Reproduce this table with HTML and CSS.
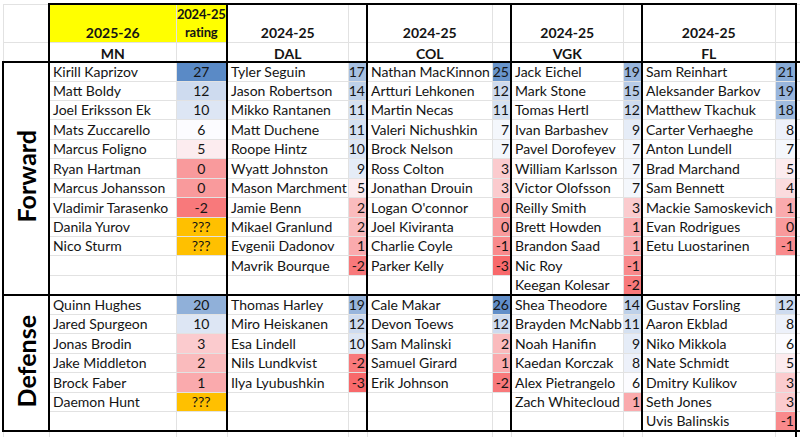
FILE: index.html
```html
<!DOCTYPE html>
<html>
<head>
<meta charset="utf-8">
<link rel="stylesheet" href="styles.css">
</head>
<body>
<table class="sheet">
<colgroup>
<col class="c-label"><col class="c-mn"><col class="c-mnr">
<col class="c-dal"><col class="c-r"><col class="c-col"><col class="c-r">
<col class="c-vgk"><col class="c-r"><col class="c-fl"><col class="c-flr"><col class="c-extra">
</colgroup>
<tbody>
<tr class="h1">
<td class="lab-blank"></td>
<td class="hd yel tl tt">2025-26</td>
<td class="hd hdn yel tt ctr">2024-25<br>rating</td>
<td class="hd tl tt">2024-25</td><td class="tt"></td>
<td class="hd tl tt">2024-25</td><td class="tt"></td>
<td class="hd tl tt">2024-25</td><td class="tt"></td>
<td class="hd tl tt">2024-25</td><td class="tt tr"></td>
<td class="x"></td>
</tr>
<tr class="h2">
<td class="lab-blank"></td>
<td class="hd tl">MN</td><td></td>
<td class="hd tl">DAL</td><td></td>
<td class="hd tl">COL</td><td></td>
<td class="hd tl">VGK</td><td></td>
<td class="hd tl">FL</td><td class="tr"></td>
<td class="x"></td>
</tr>

<tr class="sec">
<td class="lab" rowspan="12"><span class="vert">Forward</span></td>
<td class="n tl">Kirill Kaprizov</td><td class="r ctr v27">27</td>
<td class="n tl">Tyler Seguin</td><td class="r v17">17</td>
<td class="n tl">Nathan MacKinnon</td><td class="r v25">25</td>
<td class="n tl">Jack Eichel</td><td class="r v19">19</td>
<td class="n tl">Sam Reinhart</td><td class="r tr v21">21</td>
<td class="x"></td>
</tr>
<tr>
<td class="n tl">Matt Boldy</td><td class="r ctr v12">12</td>
<td class="n tl">Jason Robertson</td><td class="r v14">14</td>
<td class="n tl">Artturi Lehkonen</td><td class="r v12">12</td>
<td class="n tl">Mark Stone</td><td class="r v15">15</td>
<td class="n tl">Aleksander Barkov</td><td class="r tr v19">19</td>
<td class="x"></td>
</tr>
<tr>
<td class="n tl">Joel Eriksson Ek</td><td class="r ctr v10">10</td>
<td class="n tl">Mikko Rantanen</td><td class="r v11">11</td>
<td class="n tl">Martin Necas</td><td class="r v11">11</td>
<td class="n tl">Tomas Hertl</td><td class="r v12">12</td>
<td class="n tl">Matthew Tkachuk</td><td class="r tr v18">18</td>
<td class="x"></td>
</tr>
<tr>
<td class="n tl">Mats Zuccarello</td><td class="r ctr v6">6</td>
<td class="n tl">Matt Duchene</td><td class="r v11">11</td>
<td class="n tl">Valeri Nichushkin</td><td class="r v7">7</td>
<td class="n tl">Ivan Barbashev</td><td class="r v9">9</td>
<td class="n tl">Carter Verhaeghe</td><td class="r tr v8">8</td>
<td class="x"></td>
</tr>
<tr>
<td class="n tl">Marcus Foligno</td><td class="r ctr v5">5</td>
<td class="n tl">Roope Hintz</td><td class="r v10">10</td>
<td class="n tl">Brock Nelson</td><td class="r v7">7</td>
<td class="n tl">Pavel Dorofeyev</td><td class="r v7">7</td>
<td class="n tl">Anton Lundell</td><td class="r tr v7">7</td>
<td class="x"></td>
</tr>
<tr>
<td class="n tl">Ryan Hartman</td><td class="r ctr v0">0</td>
<td class="n tl">Wyatt Johnston</td><td class="r v9">9</td>
<td class="n tl">Ross Colton</td><td class="r v3">3</td>
<td class="n tl">William Karlsson</td><td class="r v7">7</td>
<td class="n tl">Brad Marchand</td><td class="r tr v5">5</td>
<td class="x"></td>
</tr>
<tr>
<td class="n tl">Marcus Johansson</td><td class="r ctr v0">0</td>
<td class="n tl">Mason Marchment</td><td class="r v5">5</td>
<td class="n tl">Jonathan Drouin</td><td class="r v3">3</td>
<td class="n tl">Victor Olofsson</td><td class="r v7">7</td>
<td class="n tl">Sam Bennett</td><td class="r tr v4">4</td>
<td class="x"></td>
</tr>
<tr>
<td class="n tl">Vladimir Tarasenko</td><td class="r ctr vn2">-2</td>
<td class="n tl">Jamie Benn</td><td class="r v2">2</td>
<td class="n tl">Logan O'connor</td><td class="r v0">0</td>
<td class="n tl">Reilly Smith</td><td class="r v3">3</td>
<td class="n tl">Mackie Samoskevich</td><td class="r tr v1">1</td>
<td class="x"></td>
</tr>
<tr>
<td class="n tl">Danila Yurov</td><td class="r ctr vq">???</td>
<td class="n tl">Mikael Granlund</td><td class="r v2">2</td>
<td class="n tl">Joel Kiviranta</td><td class="r v0">0</td>
<td class="n tl">Brett Howden</td><td class="r v1">1</td>
<td class="n tl">Evan Rodrigues</td><td class="r tr v0">0</td>
<td class="x"></td>
</tr>
<tr>
<td class="n tl">Nico Sturm</td><td class="r ctr vq">???</td>
<td class="n tl">Evgenii Dadonov</td><td class="r v1">1</td>
<td class="n tl">Charlie Coyle</td><td class="r vn1">-1</td>
<td class="n tl">Brandon Saad</td><td class="r v1">1</td>
<td class="n tl">Eetu Luostarinen</td><td class="r tr vn1">-1</td>
<td class="x"></td>
</tr>
<tr>
<td class="n tl"></td><td class="r ctr"></td>
<td class="n tl">Mavrik Bourque</td><td class="r vn2">-2</td>
<td class="n tl">Parker Kelly</td><td class="r vn3">-3</td>
<td class="n tl">Nic Roy</td><td class="r vn1">-1</td>
<td class="n tl"></td><td class="r tr"></td>
<td class="x"></td>
</tr>
<tr>
<td class="n tl"></td><td class="r ctr"></td>
<td class="n tl"></td><td class="r"></td>
<td class="n tl"></td><td class="r"></td>
<td class="n tl">Keegan Kolesar</td><td class="r vn2">-2</td>
<td class="n tl"></td><td class="r tr"></td>
<td class="x"></td>
</tr>

<tr class="sec">
<td class="lab" rowspan="7"><span class="vert">Defense</span></td>
<td class="n tl">Quinn Hughes</td><td class="r ctr v20">20</td>
<td class="n tl">Thomas Harley</td><td class="r v19">19</td>
<td class="n tl">Cale Makar</td><td class="r v26">26</td>
<td class="n tl">Shea Theodore</td><td class="r v14">14</td>
<td class="n tl">Gustav Forsling</td><td class="r tr v12">12</td>
<td class="x"></td>
</tr>
<tr>
<td class="n tl">Jared Spurgeon</td><td class="r ctr v10">10</td>
<td class="n tl">Miro Heiskanen</td><td class="r v12">12</td>
<td class="n tl">Devon Toews</td><td class="r v12">12</td>
<td class="n tl">Brayden McNabb</td><td class="r v11">11</td>
<td class="n tl">Aaron Ekblad</td><td class="r tr v8">8</td>
<td class="x"></td>
</tr>
<tr>
<td class="n tl">Jonas Brodin</td><td class="r ctr v3">3</td>
<td class="n tl">Esa Lindell</td><td class="r v10">10</td>
<td class="n tl">Sam Malinski</td><td class="r v2">2</td>
<td class="n tl">Noah Hanifin</td><td class="r v9">9</td>
<td class="n tl">Niko Mikkola</td><td class="r tr v6">6</td>
<td class="x"></td>
</tr>
<tr>
<td class="n tl">Jake Middleton</td><td class="r ctr v2">2</td>
<td class="n tl">Nils Lundkvist</td><td class="r vn2">-2</td>
<td class="n tl">Samuel Girard</td><td class="r v1">1</td>
<td class="n tl">Kaedan Korczak</td><td class="r v8">8</td>
<td class="n tl">Nate Schmidt</td><td class="r tr v5">5</td>
<td class="x"></td>
</tr>
<tr>
<td class="n tl">Brock Faber</td><td class="r ctr v1">1</td>
<td class="n tl">Ilya Lyubushkin</td><td class="r vn3">-3</td>
<td class="n tl">Erik Johnson</td><td class="r vn2">-2</td>
<td class="n tl">Alex Pietrangelo</td><td class="r v6">6</td>
<td class="n tl">Dmitry Kulikov</td><td class="r tr v3">3</td>
<td class="x"></td>
</tr>
<tr>
<td class="n tl">Daemon Hunt</td><td class="r ctr vq">???</td>
<td class="n tl"></td><td class="r"></td>
<td class="n tl"></td><td class="r"></td>
<td class="n tl">Zach Whitecloud</td><td class="r v1">1</td>
<td class="n tl">Seth Jones</td><td class="r tr v3">3</td>
<td class="x"></td>
</tr>
<tr class="end">
<td class="n tl"></td><td class="r ctr"></td>
<td class="n tl"></td><td class="r"></td>
<td class="n tl"></td><td class="r"></td>
<td class="n tl"></td><td class="r"></td>
<td class="n tl">Uvis Balinskis</td><td class="r tr vn1">-1</td>
<td class="x"></td>
</tr>
<tr class="tail">
<td></td><td></td><td></td><td></td><td></td><td></td><td></td><td></td><td></td><td></td><td></td><td class="x"></td>
</tr>
</tbody>
</table>
</body>
</html>
```

FILE: styles.css
```css
html, body {
  margin: 0;
  padding: 0;
  background: #ffffff;
  overflow: hidden;
  width: 800px;
  height: 437px;
}

.sheet {
  border-collapse: collapse;
  table-layout: fixed;
  width: 798px;
  margin: 3px 0 0 2px;
  font-family: Lato, "Liberation Sans", sans-serif;
  font-size: 14px;
  color: #141414;
}

.c-label { width: 46px; }
.c-mn { width: 127px; }
.c-mnr { width: 51px; }
.c-dal { width: 121px; }
.c-col { width: 125px; }
.c-vgk { width: 112px; }
.c-fl { width: 133px; }
.c-r { width: 19px; }
.c-flr { width: 21px; }
.c-extra { width: 5px; }

.sheet td {
  height: 19.45px;
  padding: 0 0 1px 3px;
  border: 1px solid #e2e2e2;
  vertical-align: bottom;
  white-space: nowrap;
  overflow: hidden;
  line-height: 17px;
  box-sizing: border-box;
}

.sheet tr.h1 td { height: 38px; }
.sheet tr.h2 td { height: 19px; line-height: 13px; }

.hd {
  font-weight: 700;
  text-align: center;
}

.hdn {
  font-size: 13px;
  letter-spacing: -0.2px;
}

.ctr { text-align: center; }

.yel { background: #ffff00; }

.sheet td.hd { padding-left: 0; }

.sheet td.r {
  text-align: right;
  padding: 0 1px 1px 0;
}

.sheet td.r.ctr {
  text-align: center;
  padding: 0 0 1px 0;
}

.h1 .hd.ctr { line-height: 18px; }

.sheet td.tl { border-left: 2px solid #000; }
.sheet td.tr { border-right: 2px solid #000; }
.sheet td.tt { border-top: 2px solid #000; }

.sheet tr.sec td { border-top: 2px solid #000; }
.sheet tr.end td { border-bottom: 2px solid #000; }
.sheet tr.h2 td { border-bottom: 2px solid #000; }

.sheet td.lab {
  border: 2px solid #000;
  vertical-align: middle;
  text-align: center;
  padding: 0;
}

.vert {
  display: inline-block;
  writing-mode: vertical-rl;
  transform: rotate(180deg);
  font-size: 25px;
  font-weight: 700;
  color: #000;
  line-height: 1;
}

.sheet td.x { border-left: 2px solid #000; padding: 0; }
.sheet tr.tail td { border-top: 2px solid #000; height: 19px; }
.sheet tr.tail td.x, .sheet tr.tail td:first-child { border-top-width: 1px; }

/* three-colour scale: red (min -3) / white (median 6) / blue (max 27) */
.v27 { background: rgb(90,138,198); }
.v26 { background: rgb(98,143,201); }
.v25 { background: rgb(105,149,203); }
.v21 { background: rgb(136,171,214); }
.v20 { background: rgb(144,176,217); }
.v19 { background: rgb(152,181,220); }
.v18 { background: rgb(159,187,222); }
.v17 { background: rgb(167,192,225); }
.v15 { background: rgb(183,203,231); }
.v14 { background: rgb(190,209,233); }
.v12 { background: rgb(206,219,239); }
.v11 { background: rgb(213,225,241); }
.v10 { background: rgb(221,230,244); }
.v9 { background: rgb(229,236,247); }
.v8 { background: rgb(237,241,250); }
.v7 { background: rgb(244,247,252); }
.v6 { background: rgb(252,252,255); }
.v5 { background: rgb(252,236,239); }
.v4 { background: rgb(251,219,222); }
.v3 { background: rgb(251,203,206); }
.v2 { background: rgb(250,187,189); }
.v1 { background: rgb(250,170,173); }
.v0 { background: rgb(249,154,156); }
.vn1 { background: rgb(249,138,140); }
.vn2 { background: rgb(248,121,123); }
.vn3 { background: rgb(248,105,107); }
.vq { background: #ffc000; }
```
